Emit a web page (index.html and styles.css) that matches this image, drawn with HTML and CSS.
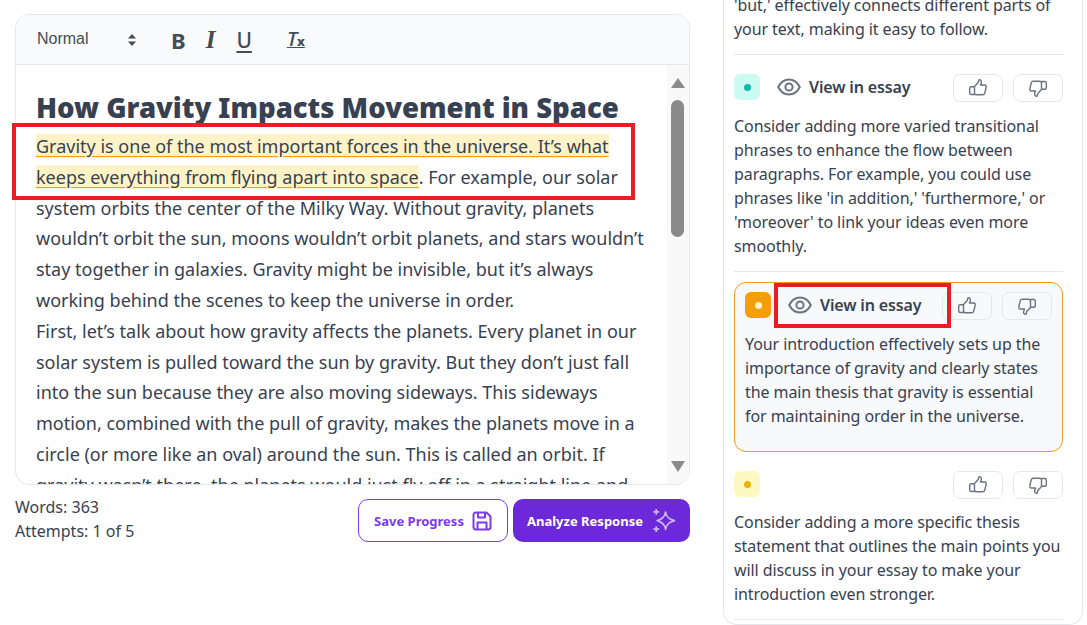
FILE: index.html
```html
<!DOCTYPE html>
<html lang="en">
<head>
  <meta charset="UTF-8">
  <title>Essay feedback</title>
  <link rel="stylesheet" href="styles.css">
</head>
<body>
  <svg class="icon-defs" width="0" height="0">
    <symbol id="eye" viewBox="0 0 24 24">
      <path d="M1.200 12C3.800 7 7.500 4.500 12 4.500S20.200 7 22.800 12C20.200 17 16.500 19.500 12 19.500S3.800 17 1.200 12z" fill="none" stroke="currentColor" stroke-width="2"/>
      <circle cx="12" cy="12" r="3.600" fill="none" stroke="currentColor" stroke-width="2"/>
    </symbol>
    <symbol id="thumb" viewBox="0 0 20 20">
      <path d="M6.500 8.500 10.200 4.600c.4-1 .4-2 .9-2.900 1.300-.2 2.300.7 2.300 2.100 0 1.200-.5 2.300-1 3.200h4.300c1.100 0 1.800 1 1.500 2l-1.500 6.300c-.3 1-1 1.500-2 1.500H9c-1 0-1.800-.3-2.500-.9zM6.500 8.800H3.200c-.9 0-1.500.6-1.500 1.500v4.700c0 .9.600 1.500 1.500 1.500h3.300z" fill="none" stroke="currentColor" stroke-width="1.400" stroke-linejoin="round"/>
    </symbol>
  </svg>

  <div class="editor-column">
    <div class="editor">
      <div class="toolbar">
        <span class="format-select">Normal
          <svg class="sort-arrows" width="10" height="14" viewBox="0 0 10 14"><path d="M5 1l4 4.500H1zM5 13l4-4.500H1z" fill="currentColor"/></svg>
        </span>
        <span class="tool tool-bold">B</span>
        <span class="tool tool-italic">I</span>
        <span class="tool tool-underline">U</span>
        <span class="tool tool-clear">T<small>x</small></span>
      </div>
      <div class="editor-body">
        <div class="essay">
          <h1>How Gravity Impacts Movement in Space</h1>
          <p><mark>Gravity is one of the most important forces in the universe. It’s what keeps everything from flying apart into space</mark>. For example, our solar system orbits the center of the Milky Way. Without gravity, planets wouldn’t orbit the sun, moons wouldn’t orbit planets, and stars wouldn’t stay together in galaxies. Gravity might be invisible, but it’s always working behind the scenes to keep the universe in order.</p>
          <p>First, let’s talk about how gravity affects the planets. Every planet in our solar system is pulled toward the sun by gravity. But they don’t just fall into the sun because they are also moving sideways. This sideways motion, combined with the pull of gravity, makes the planets move in a circle (or more like an oval) around the sun. This is called an orbit. If gravity wasn’t there, the planets would just fly off in a straight line and</p>
        </div>
        <div class="scrollbar">
          <span class="arrow-up"></span>
          <span class="thumb"></span>
          <span class="arrow-down"></span>
        </div>
      </div>
    </div>
    <div class="annotation annotation-essay"></div>

    <div class="editor-footer">
      <div class="counts">
        <div>Words: 363</div>
        <div>Attempts: 1 of 5</div>
      </div>
      <div class="actions">
        <button class="btn btn-save">Save Progress
          <svg width="20" height="20" viewBox="0 0 20 20" fill="none" stroke="currentColor" stroke-width="2" stroke-linejoin="round"><path d="M4 1.500h10.500L18.500 5.500V16a2.500 2.500 0 0 1-2.500 2.500H4A2.500 2.500 0 0 1 1.500 16V4A2.500 2.500 0 0 1 4 1.500z"/><path d="M6 1.500v5h7v-5M5.500 18.500v-7h9v7"/></svg>
        </button>
        <button class="btn btn-analyze">Analyze Response
          <svg width="25" height="25" viewBox="0 0 24 24" fill="none" stroke="#cdb5f5" stroke-width="1.700" stroke-linejoin="round"><path d="M14 4c.7 4.500 2.700 6.700 8.500 8.200-5.800 1.500-7.800 3.700-8.500 8.300-.7-4.600-2.700-6.800-8-8.300 5.300-1.500 7.300-3.700 8-8.200z"/><path d="M5 1v5.500M2.200 3.700h5.600M5 17.500V23M2.200 20.200h5.600"/></svg>
        </button>
      </div>
    </div>
  </div>

  <div class="feedback-panel">
    <p class="feedback-text first-text">'but,' effectively connects different parts of your text, making it easy to follow.</p>

    <div class="feedback-item">
      <div class="item-head">
        <span class="badge badge-teal"><i></i></span>
        <span class="view-link"><svg width="24" height="24"><use href="#eye"/></svg>View in essay</span>
        <span class="votes">
          <span class="vote"><svg width="20" height="20"><use href="#thumb"/></svg></span>
          <span class="vote vote-down"><svg width="20" height="20"><use href="#thumb"/></svg></span>
        </span>
      </div>
      <p class="feedback-text">Consider adding more varied transitional phrases to enhance the flow between paragraphs. For example, you could use phrases like 'in addition,' 'furthermore,' or 'moreover' to link your ideas even more smoothly.</p>
    </div>

    <div class="feedback-item active">
      <div class="item-head">
        <span class="badge badge-orange"><i></i></span>
        <span class="view-link"><svg width="24" height="24"><use href="#eye"/></svg>View in essay</span>
        <span class="votes">
          <span class="vote"><svg width="20" height="20"><use href="#thumb"/></svg></span>
          <span class="vote vote-down"><svg width="20" height="20"><use href="#thumb"/></svg></span>
        </span>
        <div class="annotation annotation-link"></div>
      </div>
      <p class="feedback-text">Your introduction effectively sets up the importance of gravity and clearly states the main thesis that gravity is essential for maintaining order in the universe.</p>
    </div>

    <div class="feedback-item last">
      <div class="item-head">
        <span class="badge badge-yellow"><i></i></span>
        <span class="votes">
          <span class="vote"><svg width="20" height="20"><use href="#thumb"/></svg></span>
          <span class="vote vote-down"><svg width="20" height="20"><use href="#thumb"/></svg></span>
        </span>
      </div>
      <p class="feedback-text">Consider adding a more specific thesis statement that outlines the main points you will discuss in your essay to make your introduction even stronger.</p>
    </div>
  </div>
</body>
</html>
```

FILE: styles.css
```css
/* Page */
html, body {
  height: 100%;
}

body {
  margin: 0;
  display: flex;
  align-items: flex-start;
  font-family: "Noto Sans", sans-serif;
  color: #374151;
  background: #fff;
  overflow: hidden;
}

.icon-defs {
  position: absolute;
}

/* Left column */
.editor-column {
  position: relative;
  width: 675px;
  margin: 14px 33px 0 15px;
  flex-shrink: 0;
}

.editor {
  height: 471px;
  box-sizing: border-box;
  border: 1px solid #e5e7eb;
  border-radius: 14px;
  overflow: hidden;
  display: flex;
  flex-direction: column;
}

/* Toolbar */
.toolbar {
  height: 50px;
  flex-shrink: 0;
  box-sizing: border-box;
  padding-left: 21px;
  display: flex;
  align-items: center;
  background: #f9fafb;
  border-bottom: 1px solid #e5e7eb;
  color: #444c58;
}

.format-select {
  width: 100px;
  display: flex;
  align-items: center;
  justify-content: space-between;
  margin-top: -2px;
  font-family: "Liberation Sans", sans-serif;
  font-size: 16px;
}

.sort-arrows {
  margin-top: 3px;
}

.tool {
  line-height: 24px;
  text-align: center;
}

.tool-bold {
  margin-left: 34px;
  font-size: 22px;
  font-weight: 700;
}

.tool-italic {
  margin-left: 20px;
  font-family: "Liberation Serif", serif;
  font-size: 25px;
  font-style: italic;
  font-weight: 700;
}

.tool-underline {
  margin-left: 21px;
  font-size: 21px;
  font-weight: 500;
  text-decoration: underline;
  text-decoration-thickness: 2px;
  text-underline-offset: 3px;
}

.tool-clear {
  margin-left: 35px;
  font-size: 20px;
  font-style: italic;
  font-weight: 500;
  text-decoration: underline;
  text-decoration-thickness: 1px;
}

.tool-clear small {
  font-style: normal;
  font-weight: 800;
  font-size: 13px;
}

/* Essay */
.editor-body {
  flex: 1;
  min-height: 0;
  display: flex;
}

.essay {
  flex: 1;
  min-width: 0;
  padding: 25px 20px 0 20px;
}

.essay h1 {
  margin: 0 0 5px;
  font-size: 27.5px;
  font-weight: 900;
  line-height: 36px;
}

.essay p {
  margin: 0;
  font-size: 18px;
  line-height: 30.8px;
}

.essay mark {
  color: inherit;
  background: #fef3c7;
  text-decoration: underline;
  text-decoration-color: #f59e0b;
  text-underline-offset: 3px;
}

/* Fake scrollbar, the page itself does not scroll */
.scrollbar {
  width: 21px;
  padding-right: 1px;
  flex-shrink: 0;
  display: flex;
  flex-direction: column;
  align-items: center;
  background: #f9f9f9;
}

.arrow-up, .arrow-down {
  width: 0;
  height: 0;
  border-left: 7px solid transparent;
  border-right: 7px solid transparent;
}

.arrow-up {
  margin-top: 13px;
  border-bottom: 10px solid #8a8a8a;
}

.arrow-down {
  margin-top: 224px;
  border-top: 11px solid #8a8a8a;
}

.thumb {
  width: 13px;
  height: 137px;
  margin-top: 12px;
  border-radius: 7px;
  background: #8a8a8a;
}

/* Red marks drawn over the screenshot */
.annotation {
  position: absolute;
  box-sizing: border-box;
  border: 4px solid #ec1c24;
  pointer-events: none;
}

.annotation-essay {
  left: -3px;
  top: 109px;
  width: 623px;
  height: 77px;
}

.annotation-link {
  left: 29px;
  top: -9px;
  width: 177px;
  height: 45px;
}

/* Under the editor */
.editor-footer {
  display: flex;
  justify-content: space-between;
  margin-top: 10px;
}

.counts {
  font-size: 16px;
  line-height: 24px;
}

.actions {
  display: flex;
  gap: 5px;
  margin-top: 4px;
}

.btn {
  height: 43px;
  box-sizing: border-box;
  display: flex;
  align-items: center;
  justify-content: center;
  gap: 8px;
  padding: 0;
  border-radius: 10px;
  font-family: "Noto Sans", sans-serif;
  font-size: 13px;
  font-weight: 700;
}

.btn-save {
  width: 150px;
  background: #fff;
  border: 1px solid #7c3aed;
  color: #7c3aed;
}

.btn-analyze {
  width: 177px;
  background: #6d28d9;
  border: 0;
  color: #fff;
}

/* Right panel */
.feedback-panel {
  width: 360px;
  height: 625px;
  flex-shrink: 0;
  box-sizing: border-box;
  padding: 0 19px 0 10px;
  border: 1px solid #e5e7eb;
  border-top: 0;
  border-radius: 0 0 14px 14px;
  overflow: hidden;
}

.feedback-text {
  margin: 0;
  font-size: 16px;
  line-height: 24px;
  letter-spacing: -0.08px;
}

.first-text {
  margin-top: -7px;
  padding-bottom: 13px;
  border-bottom: 1px solid #e5e7eb;
}

.feedback-item {
  padding: 19px 0 13px;
  border-bottom: 1px solid #e5e7eb;
}

.feedback-item .feedback-text {
  margin-top: 12px;
}

.feedback-item.active {
  margin: 10px 0 19px;
  padding: 9px 10px 23px;
  border: 1px solid #f59e0b;
  border-radius: 12px;
  background: #f8f9fb;
}

.feedback-item.last {
  padding-top: 0;
}

.feedback-item.last .feedback-text {
  margin-top: 11px;
}

.item-head {
  position: relative;
  display: flex;
  align-items: flex-start;
}

.badge {
  width: 26px;
  height: 26px;
  flex-shrink: 0;
  border-radius: 6px;
  display: flex;
  align-items: center;
  justify-content: center;
}

.badge i {
  width: 7px;
  height: 7px;
  border-radius: 50%;
}

.badge-teal { background: #ccfbf1; }
.badge-teal i { background: #14b8a6; }
.badge-orange { background: #f59e0b; }
.badge-orange i { background: #fef3c7; }
.badge-yellow { background: #fef9c3; }
.badge-yellow i { background: #eab308; }

.view-link {
  display: flex;
  align-items: center;
  gap: 8px;
  margin-left: 17px;
  font-size: 16px;
  font-weight: 600;
  line-height: 26px;
  letter-spacing: -0.15px;
}

.view-link svg {
  color: #6b7280;
}

.votes {
  display: flex;
  gap: 10px;
  margin-left: auto;
}

.vote {
  width: 50px;
  height: 28px;
  box-sizing: border-box;
  display: flex;
  align-items: center;
  justify-content: center;
  border: 1px solid #e5e7eb;
  border-radius: 7px;
  color: #6b7280;
}

.vote-down svg {
  transform: rotate(180deg);
}
```
